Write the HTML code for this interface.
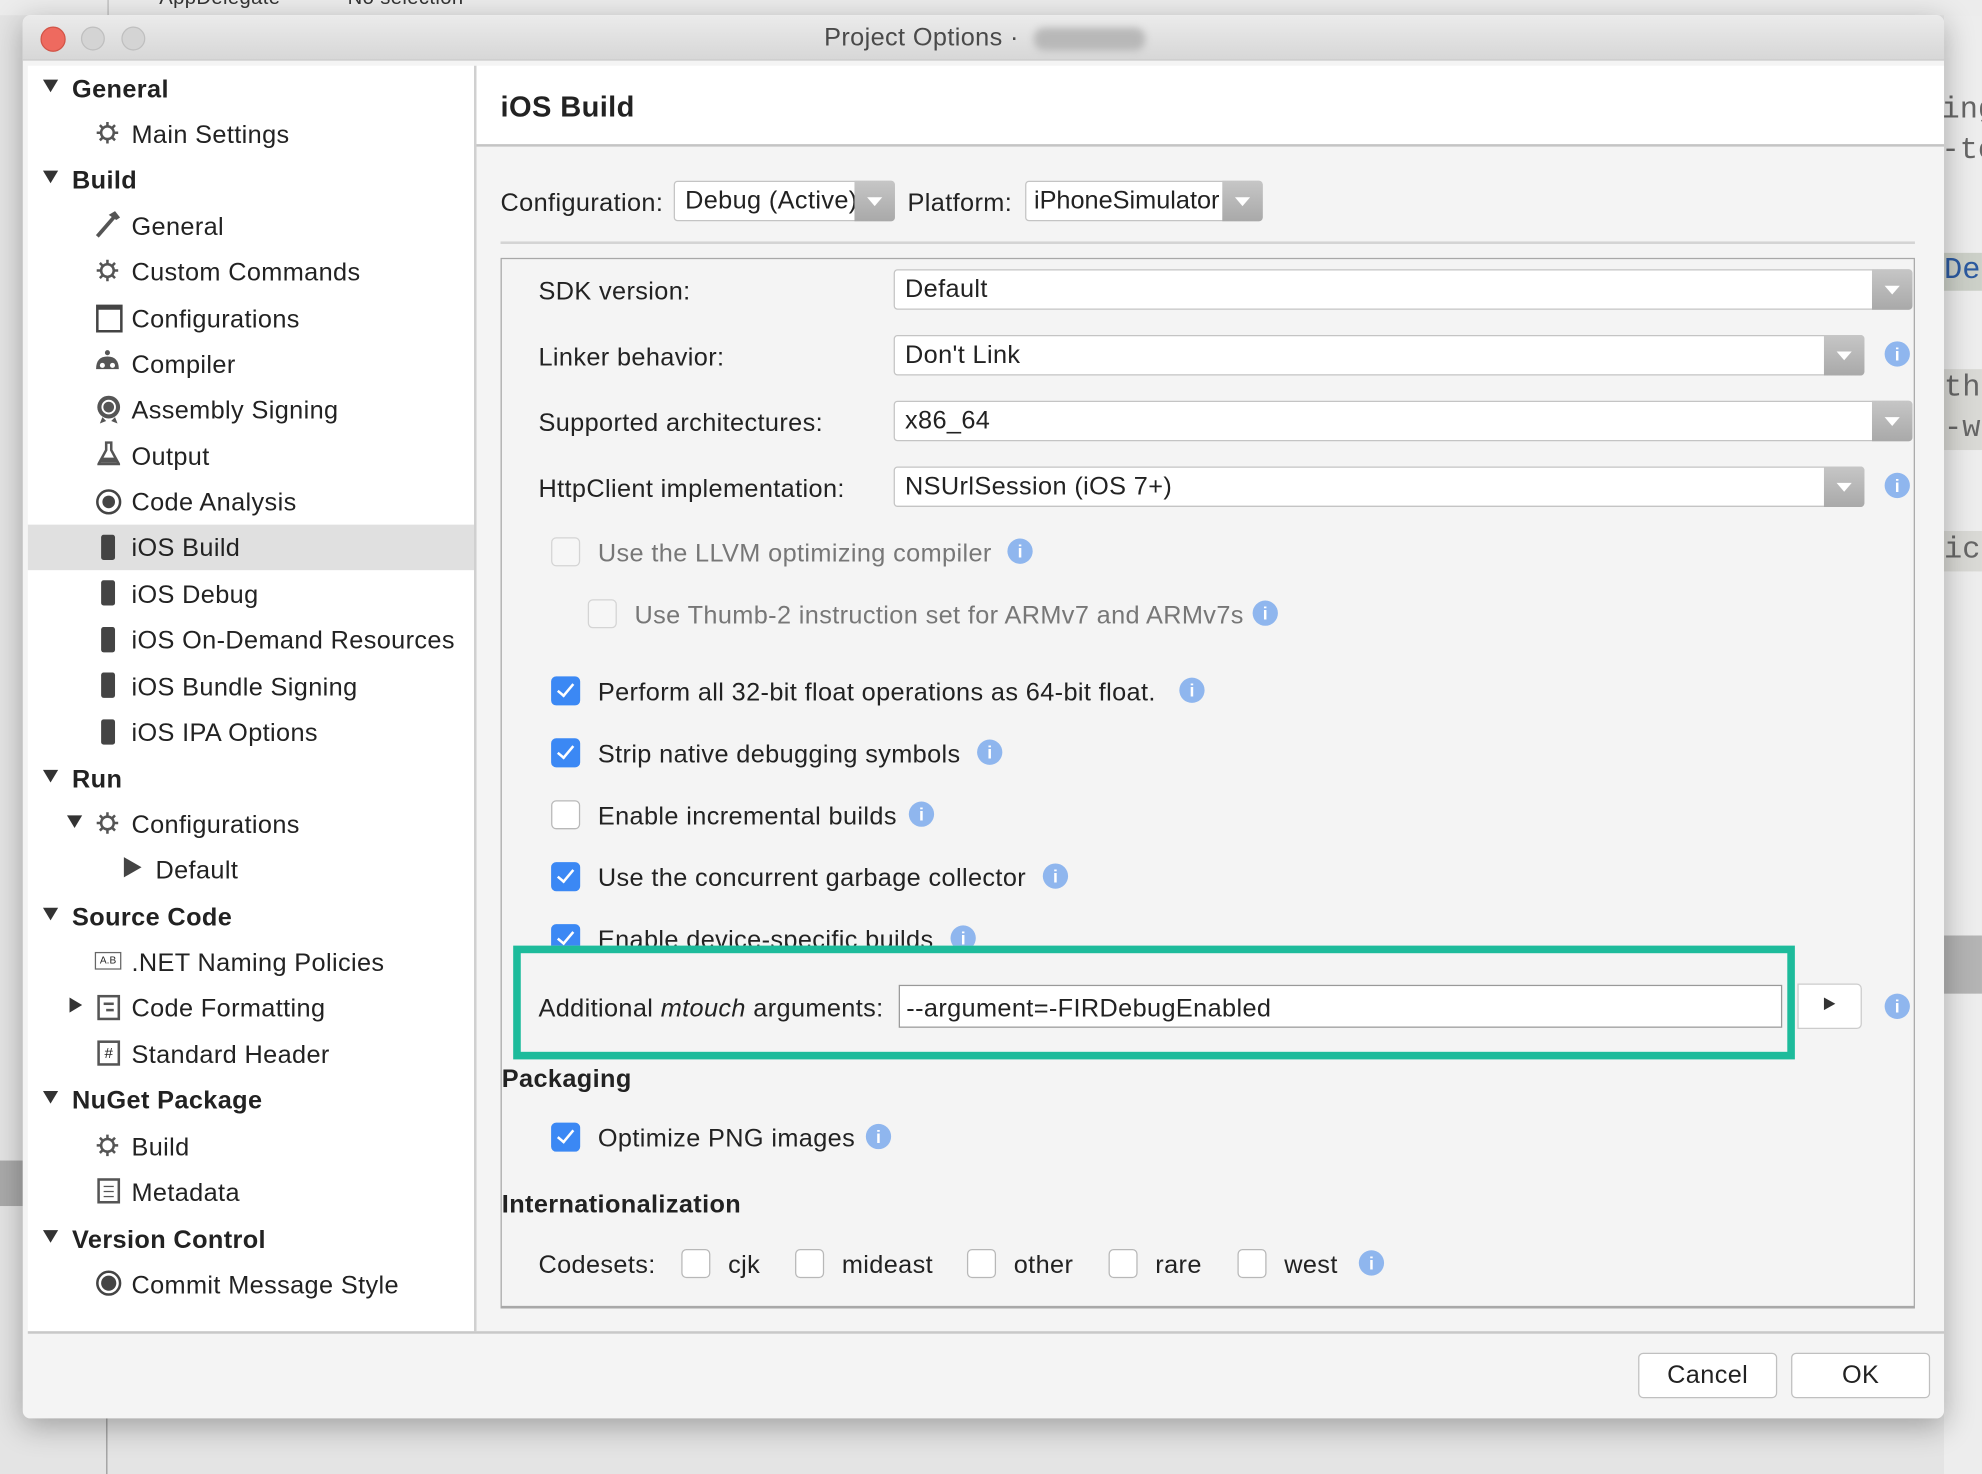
<!DOCTYPE html>
<html><head><meta charset="utf-8"><style>
html,body{margin:0;padding:0;width:1982px;height:1474px;overflow:hidden;background:#e4e4e4}
#s{position:absolute;left:0;top:0;width:1568px;height:1166px;transform:scale(1.2640,1.2642);transform-origin:0 0;font-family:"Liberation Sans",sans-serif;color:#222;font-size:20px;letter-spacing:0.3px}
.a{position:absolute;white-space:nowrap}
.t{position:absolute;white-space:nowrap;line-height:22px;margin-top:2px}
.b{font-weight:bold}
.tri{position:absolute;width:0;height:0;border-left:6px solid transparent;border-right:6px solid transparent;border-top:10px solid #333}
.trr{position:absolute;width:0;height:0;border-top:6px solid transparent;border-bottom:6px solid transparent;border-left:10px solid #333}
.ph{position:absolute;width:11px;height:20px;background:#444;border-radius:2px}
.gear{position:absolute;width:18px;height:18px}
.dd{position:absolute;height:30px;background:#fff;border:1px solid #c4c4c4;border-radius:3px}
.dd .t{left:8px;top:2px}
.db{position:absolute;top:-1px;right:-1px;width:32px;height:32px;background:linear-gradient(#c6c6c6,#a9a9a9);border-radius:0 3px 3px 0}
.db:after{content:"";position:absolute;left:10px;top:13px;border-left:6px solid transparent;border-right:6px solid transparent;border-top:7px solid #fff}
.info{position:absolute;width:20px;height:20px;border-radius:50%;background:#8fb6ee;color:#fff;font-size:14px;text-align:center;line-height:20px;font-weight:bold;letter-spacing:0}
.cb{position:absolute;width:21px;height:21px;border:1px solid #b8b8b8;border-radius:4px;background:#fff}
.cb.on{background:#3b88f4;border-color:#3b88f4}
.cb.on:after{content:"";position:absolute;left:7px;top:2px;width:5px;height:11px;border:solid #fff;border-width:0 2px 2px 0;transform:rotate(40deg)}
.cb.dis{background:#f6f6f6;border-color:#d4d4d4}
.btn{position:absolute;height:34px;background:#fff;border:1px solid #c0c0c0;border-radius:4px;text-align:center;line-height:34px}
</style></head><body><div id="s">
<svg width="0" height="0" style="position:absolute"><defs><g id="g"><circle cx="9" cy="9" r="5" fill="none" stroke="#555" stroke-width="2"/><g stroke="#555" stroke-width="2"><line x1="9" y1="0.5" x2="9" y2="3.5"/><line x1="9" y1="14.5" x2="9" y2="17.5"/><line x1="0.5" y1="9" x2="3.5" y2="9"/><line x1="14.5" y1="9" x2="17.5" y2="9"/><line x1="3" y1="3" x2="5" y2="5"/><line x1="13" y1="13" x2="15" y2="15"/><line x1="15" y1="3" x2="13" y2="5"/><line x1="3" y1="15" x2="5" y2="13"/></g></g></defs></svg>
<!-- background -->
<div class="a" style="left:0;top:0;width:1568px;height:12px;background:#ececec;overflow:hidden"><div class="a" style="left:126px;top:-10px;font-size:16px;color:#333">AppDelegate</div><div class="a" style="left:275px;top:-10px;font-size:16px;color:#333">No selection</div></div>
<div class="a" style="left:85px;top:0;width:1px;height:12px;background:#bbb"></div>
<div class="a" style="left:1538px;top:12px;width:30px;height:1154px;background:#ededed"></div>
<div class="a" style="left:1536px;top:72px;font-family:'Liberation Mono',monospace;font-size:24px;color:#666;line-height:32px;letter-spacing:0">ing<br>-to</div>
<div class="a" style="left:1538px;top:200px;width:30px;height:30px;background:#ccd0c8;color:#2c5aa0;font-family:'Liberation Mono',monospace;font-size:24px;line-height:30px;letter-spacing:0">Del</div>
<div class="a" style="left:1538px;top:292px;width:30px;height:64px;background:#d9d9d5;color:#666;font-family:'Liberation Mono',monospace;font-size:24px;line-height:32px;letter-spacing:0">thi<br>-wi</div>
<div class="a" style="left:1538px;top:420px;width:30px;height:32px;background:#d9d9d5;color:#666;font-family:'Liberation Mono',monospace;font-size:24px;line-height:32px;letter-spacing:0">ica</div>
<div class="a" style="left:1538px;top:740px;width:30px;height:46px;background:#b4b4b4"></div>
<div class="a" style="left:0;top:918px;width:18px;height:36px;background:#aaa"></div>
<div class="a" style="left:84px;top:1122px;width:1px;height:44px;background:#999"></div>
<!-- window -->
<div class="a" style="left:18px;top:12px;width:1520px;height:1110px;background:#f4f4f4;border-radius:6px;box-shadow:0 6px 24px rgba(0,0,0,.3)"></div>
<div class="a" style="left:18px;top:12px;width:1520px;height:35px;background:linear-gradient(#ebebeb,#d7d7d7);border-radius:6px 6px 0 0;border-bottom:1px solid #c4c4c4"></div>
<div class="a" style="left:32px;top:21px;width:18px;height:18px;border-radius:50%;background:#ee6a5f;border:1px solid #d25447"></div>
<div class="a" style="left:64px;top:21px;width:17px;height:17px;border-radius:50%;background:#d4d4d4;border:1px solid #bfbfbf"></div>
<div class="a" style="left:96px;top:21px;width:17px;height:17px;border-radius:50%;background:#d4d4d4;border:1px solid #bfbfbf"></div>
<div class="a" style="left:652px;top:19px;font-size:20px;color:#4a4a4a">Project Options ·</div>
<div class="a" style="left:818px;top:22px;width:88px;height:18px;background:#b8b8b8;border-radius:8px;filter:blur(3px)"></div>
<!-- sidebar -->
<div class="a" style="left:22px;top:52px;width:353px;height:1001px;background:#fff;border-right:2px solid #d0d0d0"></div>
<div class="a" style="left:22px;top:415px;width:353px;height:36px;background:#e0e0e0"></div>
<div class="a" style="left:22px;top:1053px;width:1516px;height:2px;background:#c8c8c8"></div>
<div class="tri" style="left:34px;top:63px"></div><div class="t b" style="left:57px;top:58px">General</div>
<svg class="gear" style="left:76px;top:96px"><use href="#g"/></svg><div class="t" style="left:104px;top:94px">Main Settings</div>
<div class="tri" style="left:34px;top:135px"></div><div class="t b" style="left:57px;top:130px">Build</div>
<svg class="a" style="left:74px;top:166px" width="24" height="24"><line x1="3" y1="21" x2="16" y2="6" stroke="#555" stroke-width="3"/><path d="M12 4 L17 1 L21 6 L18 8 Z" fill="#555"/></svg><div class="t" style="left:104px;top:167px">General</div>
<svg class="gear" style="left:76px;top:205px"><use href="#g"/></svg><div class="t" style="left:104px;top:203px">Custom Commands</div>
<div class="a" style="left:76px;top:241px;width:17px;height:16px;border:2px solid #444;border-top-width:4px"></div><div class="t" style="left:104px;top:240px">Configurations</div>
<svg class="a" style="left:73px;top:276px" width="24" height="22"><circle cx="12" cy="3" r="2" fill="#555"/><path d="M3 16 Q3 6 12 6 Q21 6 21 16 Z" fill="#555"/><circle cx="8" cy="13" r="2" fill="#fff"/><circle cx="16" cy="13" r="2" fill="#fff"/></svg><div class="t" style="left:104px;top:276px">Compiler</div>
<svg class="a" style="left:75px;top:312px" width="22" height="24"><circle cx="11" cy="10" r="9" fill="#555"/><circle cx="11" cy="10" r="5" fill="none" stroke="#fff" stroke-width="1.5"/><path d="M6 18 L4 23 L9 21 Z M16 18 L18 23 L13 21 Z" fill="#555"/></svg><div class="t" style="left:104px;top:312px">Assembly Signing</div>
<svg class="a" style="left:77px;top:349px" width="18" height="20"><path d="M6 1 H12 M7 1 V7 L1 18 H17 L11 7 V1" fill="none" stroke="#555" stroke-width="2"/><path d="M4 13 L14 13 L16 17 L2 17 Z" fill="#555"/></svg><div class="t" style="left:104px;top:349px">Output</div>
<div class="a" style="left:76px;top:387px;width:16px;height:16px;border:2px solid #444;border-radius:50%"></div><div class="a" style="left:81px;top:392px;width:10px;height:10px;background:#444;border-radius:50%"></div><div class="t" style="left:104px;top:385px">Code Analysis</div>
<div class="ph" style="left:80px;top:423px"></div><div class="t" style="left:104px;top:421px">iOS Build</div>
<div class="ph" style="left:80px;top:459px"></div><div class="t" style="left:104px;top:458px">iOS Debug</div>
<div class="ph" style="left:80px;top:496px"></div><div class="t" style="left:104px;top:494px">iOS On-Demand Resources</div>
<div class="ph" style="left:80px;top:532px"></div><div class="t" style="left:104px;top:531px">iOS Bundle Signing</div>
<div class="ph" style="left:80px;top:569px"></div><div class="t" style="left:104px;top:567px">iOS IPA Options</div>
<div class="tri" style="left:34px;top:609px"></div><div class="t b" style="left:57px;top:604px">Run</div>
<div class="tri" style="left:53px;top:645px"></div><svg class="gear" style="left:76px;top:642px"><use href="#g"/></svg><div class="t" style="left:104px;top:640px">Configurations</div>
<div class="a" style="left:98px;top:678px;border-top:8px solid transparent;border-bottom:8px solid transparent;border-left:14px solid #444"></div><div class="t" style="left:123px;top:676px">Default</div>
<div class="tri" style="left:34px;top:718px"></div><div class="t b" style="left:57px;top:713px">Source Code</div>
<div class="a" style="left:75px;top:753px;width:19px;height:12px;border:1px solid #666;font-size:8px;line-height:12px;text-align:center;letter-spacing:0">A.B</div><div class="t" style="left:104px;top:749px">.NET Naming Policies</div>
<div class="trr" style="left:55px;top:789px"></div><div class="a" style="left:77px;top:787px;width:14px;height:16px;border:2px solid #555"><div class="a" style="left:3px;top:4px;width:8px;height:2px;background:#555"></div><div class="a" style="left:5px;top:9px;width:6px;height:2px;background:#555"></div></div><div class="t" style="left:104px;top:785px">Code Formatting</div>
<div class="a" style="left:77px;top:823px;width:14px;height:16px;border:2px solid #555;font-size:12px;line-height:16px;text-align:center;letter-spacing:0">#</div><div class="t" style="left:104px;top:822px">Standard Header</div>
<div class="tri" style="left:34px;top:863px"></div><div class="t b" style="left:57px;top:858px">NuGet Package</div>
<svg class="gear" style="left:76px;top:897px"><use href="#g"/></svg><div class="t" style="left:104px;top:895px">Build</div>
<div class="a" style="left:77px;top:932px;width:14px;height:16px;border:2px solid #555"><div class="a" style="left:3px;top:4px;width:8px;height:1px;background:#555"></div><div class="a" style="left:3px;top:8px;width:8px;height:1px;background:#555"></div><div class="a" style="left:3px;top:12px;width:8px;height:1px;background:#555"></div></div><div class="t" style="left:104px;top:931px">Metadata</div>
<div class="tri" style="left:34px;top:973px"></div><div class="t b" style="left:57px;top:968px">Version Control</div>
<div class="a" style="left:76px;top:1005px;width:16px;height:16px;border:2px solid #444;border-radius:50%"></div><div class="a" style="left:80px;top:1009px;width:12px;height:12px;background:#444;border-radius:50%"></div><div class="t" style="left:104px;top:1004px">Commit Message Style</div>
<!-- right header -->
<div class="a" style="left:377px;top:52px;width:1161px;height:62px;background:#fff;border-bottom:2px solid #c4c4c4"></div>
<div class="a b" style="left:396px;top:71px;font-size:23px;color:#222">iOS Build</div>
<div class="t" style="left:396px;top:148px">Configuration:</div>
<div class="dd" style="left:533px;top:143px;width:173px"><div class="t">Debug (Active)</div><div class="db"></div></div>
<div class="t" style="left:718px;top:148px">Platform:</div>
<div class="dd" style="left:811px;top:143px;width:186px"><div class="t" style="left:6px;letter-spacing:0">iPhoneSimulator</div><div class="db"></div></div>
<div class="a" style="left:396px;top:191px;width:1119px;height:2px;background:#d4d4d4"></div>
<!-- panel -->
<div class="a" style="left:396px;top:204px;width:1117px;height:828px;border:1px solid #a8a8a8;border-width:1px 1px 2px 1px"></div>
<div class="t" style="left:426px;top:218px">SDK version:</div>
<div class="dd" style="left:707px;top:213px;width:804px"><div class="t">Default</div><div class="db"></div></div>
<div class="t" style="left:426px;top:270px">Linker behavior:</div>
<div class="dd" style="left:707px;top:265px;width:766px"><div class="t">Don't Link</div><div class="db"></div></div><div class="info" style="left:1491px;top:270px">i</div>
<div class="t" style="left:426px;top:322px">Supported architectures:</div>
<div class="dd" style="left:707px;top:317px;width:804px"><div class="t">x86_64</div><div class="db"></div></div>
<div class="t" style="left:426px;top:374px">HttpClient implementation:</div>
<div class="dd" style="left:707px;top:369px;width:766px"><div class="t">NSUrlSession (iOS 7+)</div><div class="db"></div></div><div class="info" style="left:1491px;top:374px">i</div>
<div class="cb dis" style="left:436px;top:425px"></div><div class="t" style="left:473px;top:425px;color:#777">Use the LLVM optimizing compiler</div><div class="info" style="left:797px;top:426px">i</div>
<div class="cb dis" style="left:465px;top:474px"></div><div class="t" style="left:502px;top:474px;color:#777">Use Thumb-2 instruction set for ARMv7 and ARMv7s</div><div class="info" style="left:991px;top:475px">i</div>
<div class="cb on" style="left:436px;top:535px"></div><div class="t" style="left:473px;top:535px">Perform all 32-bit float operations as 64-bit float.</div><div class="info" style="left:933px;top:536px">i</div>
<div class="cb on" style="left:436px;top:584px"></div><div class="t" style="left:473px;top:584px">Strip native debugging symbols</div><div class="info" style="left:773px;top:585px">i</div>
<div class="cb" style="left:436px;top:633px"></div><div class="t" style="left:473px;top:633px">Enable incremental builds</div><div class="info" style="left:719px;top:634px">i</div>
<div class="cb on" style="left:436px;top:682px"></div><div class="t" style="left:473px;top:682px">Use the concurrent garbage collector</div><div class="info" style="left:825px;top:683px">i</div>
<div class="a" style="left:420px;top:728px;width:400px;height:20px;overflow:hidden"><div class="cb on" style="left:16px;top:3px"></div><div class="t" style="left:53px;top:3px">Enable device-specific builds</div><div class="info" style="left:332px;top:4px">i</div></div>
<div class="a" style="left:406px;top:748px;width:1002px;height:78px;border:6px solid #1dbb9b"></div>
<div class="t" style="left:426px;top:785px">Additional <i>mtouch</i> arguments:</div>
<div class="a" style="left:711px;top:779px;width:697px;height:32px;background:#fff;border:1px solid #999"></div>
<div class="t" style="left:717px;top:785px">--argument=-FIRDebugEnabled</div>
<div class="a" style="left:1422px;top:778px;width:49px;height:34px;background:#fff;border:1px solid #ccc;border-radius:0 4px 4px 0"></div>
<div class="trr" style="left:1443px;top:789px;border-left-width:9px;border-top-width:5px;border-bottom-width:5px"></div>
<div class="info" style="left:1491px;top:786px">i</div>
<div class="t b" style="left:397px;top:841px">Packaging</div>
<div class="cb on" style="left:436px;top:888px"></div><div class="t" style="left:473px;top:888px">Optimize PNG images</div><div class="info" style="left:685px;top:889px">i</div>
<div class="t b" style="left:397px;top:940px">Internationalization</div>
<div class="t" style="left:426px;top:988px">Codesets:</div>
<div class="cb" style="left:539px;top:988px"></div><div class="t" style="left:576px;top:988px">cjk</div>
<div class="cb" style="left:629px;top:988px"></div><div class="t" style="left:666px;top:988px">mideast</div>
<div class="cb" style="left:765px;top:988px"></div><div class="t" style="left:802px;top:988px">other</div>
<div class="cb" style="left:877px;top:988px"></div><div class="t" style="left:914px;top:988px">rare</div>
<div class="cb" style="left:979px;top:988px"></div><div class="t" style="left:1016px;top:988px">west</div>
<div class="info" style="left:1075px;top:989px">i</div>
<div class="btn" style="left:1296px;top:1070px;width:108px">Cancel</div>
<div class="btn" style="left:1417px;top:1070px;width:108px">OK</div>
</div></body></html>
